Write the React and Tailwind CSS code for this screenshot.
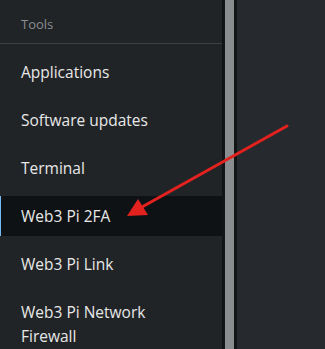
import React from 'react'

// Menú lateral de herramientas (tema oscuro) con flecha de anotación

const items = [
  { label: 'Applications' },
  { label: 'Software updates' },
  { label: 'Terminal' },
  { label: 'Web3 Pi 2FA', active: true },
  { label: 'Web3 Pi Link' },
  { label: 'Web3 Pi Network Firewall' },
]

function Arrow() {
  return (
    <svg className="absolute left-0 top-0 pointer-events-none" width="325" height="349" viewBox="0 0 325 349">
      <line x1="287" y1="126" x2="142" y2="207" stroke="#e3211f" strokeWidth="3" strokeLinecap="round" />
      <polygon points="127,216 138,199 148,215" fill="#e3211f" />
    </svg>
  )
}

export default function App() {
  return (
    <div
      className="relative flex w-[325px] h-[349px] overflow-hidden bg-[#26292d]"
      style={{ fontFamily: '"Open Sans", "Liberation Sans", sans-serif' }}
    >
      {/* Barra lateral */}
      <nav className="w-[222px] shrink-0 bg-[#212427] flex flex-col">
        <div className="shrink-0 h-[44px] pl-[21px] pt-[15px] text-[13px] text-[#8b8d90] border-b border-[#3c3f43]">
          Tools
        </div>
        <ul className="shrink-0 flex flex-col pt-[8px] gap-2">
          {items.map((it) => (
            <li
              key={it.label}
              className={
                it.active
                  ? 'min-h-[40px] flex items-center py-2 pl-[20px] pr-[30px] text-[15.5px] leading-6 text-[#e8e8e8] bg-[#0f1215] border-l border-[#73bcf7]'
                  : 'min-h-[40px] flex items-center py-2 pl-[21px] pr-[30px] text-[15.5px] leading-6 text-[#e8e8e8]'
              }
            >
              {it.label}
            </li>
          ))}
        </ul>
      </nav>

      {/* Barra de desplazamiento */}
      <div className="w-[15px] shrink-0 bg-[#121416] flex justify-center">
        <div className="w-[9px] bg-[#8a8d90]" />
      </div>

      {/* Zona principal */}
      <main className="flex-1" />

      <Arrow />
    </div>
  )
}
